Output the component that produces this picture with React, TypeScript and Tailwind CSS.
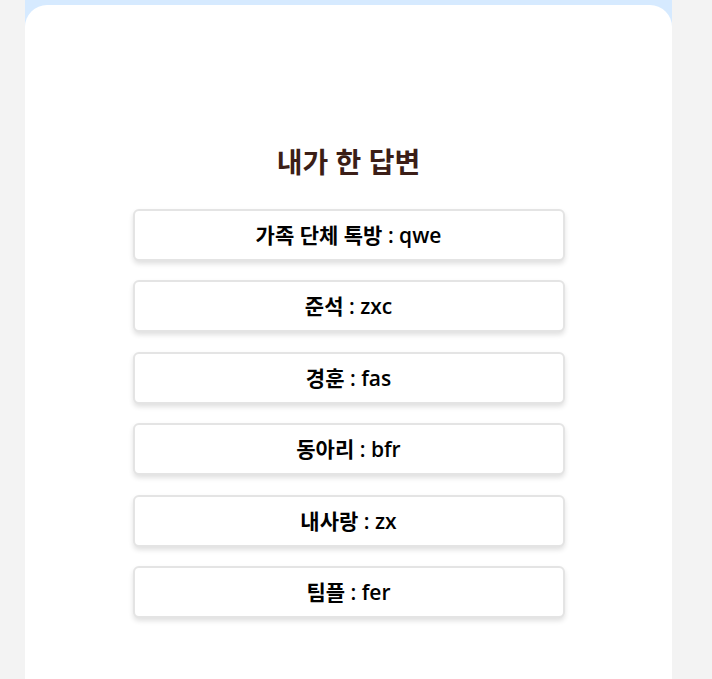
const answers = [
  { room: "가족 단체 톡방", text: "qwe" },
  { room: "준석", text: "zxc" },
  { room: "경훈", text: "fas" },
  { room: "동아리", text: "bfr" },
  { room: "내사랑", text: "zx" },
  { room: "팀플", text: "fer" },
];

export default function App() {
  return (
    <div
      className="flex h-[679px] overflow-hidden bg-[#f3f3f3] pl-[25px]"
      style={{ fontFamily: '"Open Sans", "Noto Sans CJK KR", sans-serif' }}
    >
      <div className="flex w-[647px] flex-col bg-[#d6eaff] pt-[5px]">
        <div className="flex flex-1 flex-col items-center rounded-t-[22px] bg-white pt-[139px]">
          <h2 className="text-[28px] font-bold leading-[36px] text-[#3b1e17]">내가 한 답변</h2>
          <ul className="mt-[29px] flex w-[432px] flex-col gap-[19.4px]">
            {answers.map((a) => (
              <li
                key={a.room}
                className="rounded-[6px] border-2 border-[#e4e4e4] bg-white py-[12px] text-center text-[21px] font-semibold leading-[24px] text-black shadow-[0_3px_5px_rgba(0,0,0,0.12)]"
              >
                {a.room} : {a.text}
              </li>
            ))}
          </ul>
        </div>
      </div>
    </div>
  );
}
